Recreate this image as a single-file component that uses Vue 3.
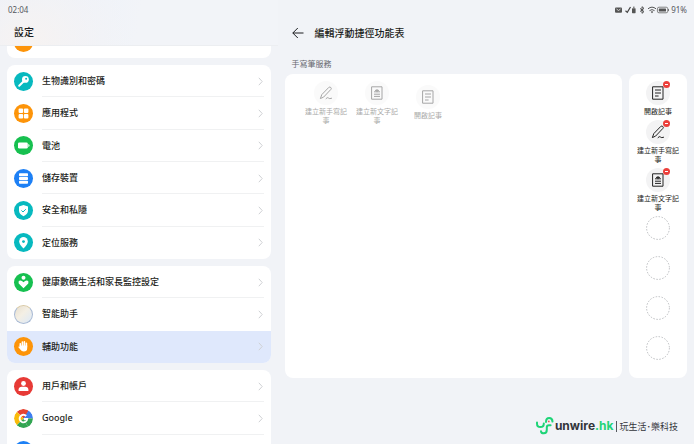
<template>
  <div class="screen">
    <!-- Settings list -->
    <aside class="left">
      <header class="top">
        <time class="clock">02:04</time>
        <h1>設定</h1>
      </header>
      <nav class="list" aria-label="設定">
        <div class="card cut">
          <a class="row" href="#"><span class="badge orange"></span></a>
        </div>
        <div v-for="(group, g) in groups" :key="g" class="card" :class="group.size">
          <a v-for="item in group.items" :key="item.icon" class="row" :class="{ active: item.active }" href="#">
            <span class="badge" :class="item.color">
              <svg viewBox="0 0 19 19" aria-hidden="true">
                <g v-if="item.icon === 'key'">
                  <circle cx="11.4" cy="7.4" r="3.4" fill="#fff" />
                  <path d="M9.5 9.5 5.2 13.8" stroke="#fff" stroke-width="2" stroke-linecap="round" />
                  <circle cx="12.1" cy="6.8" r="1" fill="#07b9bf" />
                </g>
                <g v-else-if="item.icon === 'apps'" fill="#fff">
                  <rect x="4.6" y="4.6" width="4.5" height="4.5" rx="1" />
                  <rect x="9.9" y="4.6" width="4.5" height="4.5" rx="1" />
                  <rect x="4.6" y="9.9" width="4.5" height="4.5" rx="1" />
                  <rect x="9.9" y="9.9" width="4.5" height="4.5" rx="1" />
                </g>
                <g v-else-if="item.icon === 'battery'" fill="#fff">
                  <rect x="4" y="6.4" width="9.8" height="6.2" rx="1.4" />
                  <path d="M14.3 8q1.2.2 1.2 1.5t-1.2 1.5z" />
                </g>
                <g v-else-if="item.icon === 'storage'" fill="#fff">
                  <rect x="5" y="4.3" width="9" height="3" rx=".8" />
                  <rect x="5" y="8" width="9" height="3" rx=".8" />
                  <rect x="5" y="11.7" width="9" height="3" rx=".8" />
                </g>
                <g v-else-if="item.icon === 'shield'">
                  <path d="M9.5 4 14 5.6v3.9q0 3.6-4.5 5.7Q5 13.1 5 9.5V5.6z" fill="#fff" />
                  <path d="m7.4 9.4 1.6 1.6 2.8-2.8" fill="none" stroke="#07b9bf" />
                </g>
                <g v-else-if="item.icon === 'pin'">
                  <path d="M9.5 15.4Q5.2 11.4 5.2 8.4a4.3 4.3 0 0 1 8.6 0q0 3-4.3 7z" fill="#fff" />
                  <circle cx="9.5" cy="8.6" r="1.4" fill="#07b9bf" />
                </g>
                <g v-else-if="item.icon === 'heart'" fill="#fff">
                  <circle cx="9.5" cy="4.8" r="2" />
                  <path d="M9.5 15.2 4.7 10.6Q3.9 8.2 5.8 7.5q2-.3 3.7 1.8 1.7-2.1 3.7-1.8 1.9.7 1.1 3.1z" />
                </g>
                <g v-else-if="item.icon === 'hand'">
                  <path d="M6.3 10V6.7M8.4 9V5M10.4 9V4.8M12.4 10V6.2" stroke="#fff" stroke-width="1.6" stroke-linecap="round" />
                  <path d="M5.5 8.6h7.7v2.7q0 3.3-3.4 3.3-2.3 0-3.5-2.1L4.2 10q.5-1 1.8.1z" fill="#fff" />
                </g>
                <g v-else-if="item.icon === 'user'" fill="#fff">
                  <circle cx="9.5" cy="6.5" r="2.4" />
                  <path d="M4.6 14v-1.6Q4.9 9.7 7.7 9.7h3.6q2.8 0 3.1 2.7V14z" />
                </g>
                <g v-else-if="item.icon === 'google'">
                  <path d="M9.5 9.5 2.8 2.8A9.5 9.5 0 0 1 14.5 1.4l-2 5z" fill="#e64434" />
                  <path d="M9.5 9.5 2.8 16.2A9.5 9.5 0 0 1 2.8 2.8z" fill="#fabb0a" />
                  <path d="M9.5 9.5 14 17.9A9.5 9.5 0 0 1 2.8 16.2z" fill="#32a552" />
                  <path d="M9.5 9.5 14.5 1.4A9.5 9.5 0 0 1 19 9.5z" fill="#3e7ef0" />
                  <path d="M9.5 9.5H19a9.5 9.5 0 0 1-5 8.4z" fill="#32a552" />
                  <path d="M12.2 7A3.8 3.8 0 1 0 13.2 10H9.8" fill="none" stroke="#fff" stroke-width="1.9" />
                </g>
              </svg>
            </span>
            <span class="name">{{ item.name }}</span>
            <svg class="chevron" viewBox="0 0 5 9" aria-hidden="true"><path d="m.8.8 3.4 3.7L.8 8.2" /></svg>
          </a>
        </div>
      </nav>
    </aside>

    <!-- Shortcut menu editor -->
    <main class="right">
      <header class="top">
        <div class="status">
          <svg viewBox="0 0 54 8" aria-label="狀態列">
            <rect x="0" y="1.4" width="7" height="5.4" rx="1" fill="#555" />
            <path d="m1.5 3 2 1.5 2-1.5" fill="none" stroke="#eee" stroke-width=".8" />
            <path d="m10.5 4.8 1.8 1.6L15.5 1" fill="none" stroke="#444" stroke-width="1.2" />
            <rect x="17" y="2.2" width="3.6" height="5" rx=".6" fill="#555" />
            <path d="M18 1.2h1.6" stroke="#555" />
            <path d="m25 2.4 4 3.2-2 1.7V.7l2 1.7-4 3.2" fill="none" stroke="#444" stroke-width=".9" />
            <path d="M33 2.8q4-3.3 8 0M34.5 4.6q2.5-2 5 0" fill="none" stroke="#444" stroke-width=".9" />
            <path d="m35.8 5.7 1.2 1.5 1.2-1.5q-1.2-.8-2.4 0z" fill="#444" />
            <rect x="42.4" y="1.2" width="10.4" height="5.6" rx="1.6" fill="none" stroke="#666" stroke-width=".8" />
            <rect x="43.8" y="2.6" width="7.2" height="2.8" rx=".5" fill="#555" />
            <path d="M53.6 3v2" stroke="#555" stroke-width=".8" />
          </svg>
          <span>91%</span>
        </div>
        <div class="title">
          <button type="button" aria-label="返回">
            <svg viewBox="0 0 12 12"><path d="M11.5 6H.8M5.8 1 .8 6l5 5" /></svg>
          </button>
          <h2>編輯浮動捷徑功能表</h2>
        </div>
      </header>

      <h3>手寫筆服務</h3>
      <div class="panels">
        <section class="panel pool">
          <button v-for="s in pool" :key="s.icon" class="shortcut" type="button" disabled>
            <span class="disc">
              <svg viewBox="0 0 24 24" aria-hidden="true"><path :d="glyphs[s.icon]" /></svg>
            </span>
            <span class="label">{{ s.name }}</span>
          </button>
        </section>
        <section class="panel chosen">
          <button v-for="s in chosen" :key="s.icon" class="shortcut" type="button">
            <span class="disc">
              <svg viewBox="0 0 24 24" aria-hidden="true"><path :d="glyphs[s.icon]" /></svg>
              <i class="minus"></i>
            </span>
            <span class="label">{{ s.name }}</span>
          </button>
          <div v-for="n in 4" :key="n" class="slot">
            <svg viewBox="0 0 24 24" aria-hidden="true"><circle cx="12" cy="12" r="11.4" /></svg>
          </div>
        </section>
      </div>

      <footer>
        <svg class="mark" viewBox="0 0 20 20" aria-hidden="true">
          <g fill="none" stroke="#1ed477" stroke-width="2" stroke-linecap="round">
            <path d="M2 6.5v1q0 3.6 3.4 3.6T8.8 7.5" />
            <path d="M11 6q0-4 3.2-4t3.3 3.6" />
            <path d="M15.6 9.2H14q-2.2 0-2.2 2.3v2.2q0 3.6-3 3.6-2.6 0-2.8-2" />
          </g>
          <circle cx="13.8" cy="5.4" r=".9" fill="#e55" />
        </svg>
        <strong>unwire<em>.hk</em></strong>
        <span class="slogan">玩生活･樂科技</span>
      </footer>
    </main>
  </div>
</template>

<script setup>
const groups = [
  {
    size: 'six',
    items: [
      { name: '生物識別和密碼', icon: 'key', color: 'teal' },
      { name: '應用程式', icon: 'apps', color: 'orange' },
      { name: '電池', icon: 'battery', color: 'green' },
      { name: '儲存裝置', icon: 'storage', color: 'blue' },
      { name: '安全和私隱', icon: 'shield', color: 'teal' },
      { name: '定位服務', icon: 'pin', color: 'teal' }
    ]
  },
  {
    size: 'three',
    items: [
      { name: '健康數碼生活和家長監控設定', icon: 'heart', color: 'green' },
      { name: '智能助手', icon: 'assistant', color: 'pearl' },
      { name: '輔助功能', icon: 'hand', color: 'orange', active: true }
    ]
  },
  {
    size: 'three',
    items: [
      { name: '用戶和帳戶', icon: 'user', color: 'red' },
      { name: 'Google', icon: 'google', color: 'plain' },
      { name: '', icon: 'more', color: 'blue' }
    ]
  }
]

// line drawings shared by both panels
const glyphs = {
  pen: 'M6.5 17.2 7.8 13.6 14.8 6.4q1-.8 2 .1t.1 1.9L9.9 15.8zM12 17.6q1.4-1.8 2.4-.6t3.2.3',
  text: 'M7 5.8h10v12.4H7zM9.4 15.4h5.2M9.4 13.2h5.2M9.4 10.8h5.2M12 8.4v2.4M10.4 9.4h3.2',
  note: 'M7 5.8h10v12.4H7zM9.4 9h5.2M9.4 12h5.2M9.4 15h2.8'
}

const note = { name: '開啟記事', icon: 'note' }
const pen = { name: '建立新手寫記事', icon: 'pen' }
const text = { name: '建立新文字記事', icon: 'text' }

const pool = [pen, text, note]
const chosen = [note, pen, text]
</script>

<style>
body {
  margin: 0;
  background: #f1f3f7;
}
</style>

<style scoped>
.screen {
  display: grid;
  grid-template-columns: 2fr 3fr;
  height: 100vh;
  overflow: hidden;
  font-family: "Noto Sans", "Noto Sans CJK TC", sans-serif;
  color: #1c1d20;
  background: #f1f3f7;
}

h1, h2, h3 {
  margin: 0;
  font-size: 10px;
  line-height: 16px;
  font-weight: 500;
}

button {
  margin: 0;
  padding: 0;
  border: 0;
  background: none;
  font: inherit;
  color: inherit;
}

svg {
  display: block;
}

.top {
  flex: none;
  display: flex;
  flex-direction: column;
  justify-content: space-between;
  box-sizing: border-box;
  height: 46px;
  padding: 4px 7px 5px;
}

/* left side */
.left {
  display: flex;
  flex-direction: column;
  min-height: 0;
  overflow: hidden;
}

.left .top {
  padding-left: 14px;
  background: radial-gradient(circle at 10% 100%, #f7f3f1, transparent 40%), linear-gradient(100deg, #e9f0fc, #f2f4f8 50%);
  border-bottom: 1px solid #eceef1;
}

.clock {
  margin-left: -6px;
  font-size: 8px;
  line-height: 12px;
  color: #55585e;
}

.list {
  display: flex;
  flex-direction: column;
  gap: 7px;
  padding: 0 7px;
}

.card {
  flex: none;
  display: flex;
  flex-direction: column;
  overflow: hidden;
  border-radius: 8px;
  background: #fff;
}

.cut {
  height: 12px;
  justify-content: flex-end;
  border-radius: 0 0 8px 8px;
}

.six {
  min-height: 194px;
}

.three {
  min-height: 97px;
}

.row {
  position: relative;
  flex: 1 0 auto;
  display: flex;
  align-items: center;
  gap: 9px;
  min-height: 32px;
  padding: 0 8px 0 7px;
  text-decoration: none;
  color: inherit;
}

.row:not(:last-child)::after {
  content: "";
  position: absolute;
  right: 7px;
  bottom: 0;
  left: 35px;
  height: 1px;
  background: #f0f1f2;
}

.active {
  background: #dfe8fc;
}

.row:has(+ .active)::after {
  display: none;
}

.badge {
  flex: none;
  width: 19px;
  height: 19px;
  border-radius: 50%;
  overflow: hidden;
}

.teal { background: #07b9bf; }
.orange { background: #fd9409; }
.green { background: #17c050; }
.blue { background: #1d80f5; }
.red { background: #e73a36; }
.pearl {
  box-sizing: border-box;
  border: 1px solid #a9bad4;
  border-top-color: #d9c9a5;
  background: linear-gradient(135deg, #e8dfcd, #f4efe4 45%, #dce9f8);
}

.name {
  flex: 1;
  font-size: 9px;
  line-height: 14px;
  font-weight: 500;
}

.chevron {
  width: 5px;
  height: 9px;
  fill: none;
  stroke: #cfd1d4;
}

/* right side */
.right {
  display: flex;
  flex-direction: column;
  min-width: 0;
  padding: 0 7px;
}

.right .top {
  padding-right: 0;
}

.status {
  display: flex;
  align-items: center;
  justify-content: flex-end;
  gap: 2px;
  font-size: 8px;
  line-height: 12px;
  color: #55585e;
}

.status svg {
  width: 54px;
  height: 8px;
}

.title {
  display: flex;
  align-items: center;
  gap: 11px;
}

.title svg {
  width: 12px;
  height: 12px;
  fill: none;
  stroke: #1c1d20;
}

h3 {
  padding: 10px 7px 2px;
  font-size: 8px;
  font-weight: 400;
  color: #66696f;
}

.panels {
  display: flex;
  gap: 7px;
  min-height: 304px;
}

.panel {
  box-sizing: border-box;
  padding-top: 7px;
  border-radius: 8px;
  background: #fff;
}

.pool {
  flex: 1;
  display: flex;
  align-items: flex-start;
  padding-left: 16px;
}

.pool .shortcut {
  width: 51px;
  opacity: 0.4;
}

.pool .shortcut:last-child {
  padding-top: 4px;
}

.chosen {
  flex: none;
  width: 58px;
}

.chosen .shortcut {
  width: 100%;
}

.shortcut {
  display: flex;
  flex-direction: column;
  align-items: center;
  gap: 2px;
  padding-bottom: 4px;
}

.disc {
  position: relative;
  width: 24px;
  height: 24px;
  border-radius: 50%;
  background: #f3f3f4;
}

.disc svg {
  fill: none;
  stroke: #222;
  stroke-linecap: round;
  stroke-linejoin: round;
}

.minus {
  position: absolute;
  top: 0;
  right: 0;
  display: grid;
  place-items: center;
  width: 7px;
  height: 7px;
  border-radius: 50%;
  background: #ec3f3b;
}

.minus::after {
  content: "";
  width: 3px;
  height: 1px;
  background: #fff;
}

.label {
  max-width: 44px;
  font-size: 7px;
  line-height: 9px;
  text-align: center;
}

.slot {
  display: flex;
  justify-content: center;
  height: 40px;
}

.slot svg {
  width: 24px;
  height: 24px;
  fill: none;
  stroke: #bbbdc0;
  stroke-width: 1;
  stroke-dasharray: 1.5 1.5;
}

footer {
  display: flex;
  align-items: center;
  justify-content: flex-end;
  margin-top: auto;
  padding: 0 9px 8px 0;
}

.mark {
  width: 20px;
  height: 20px;
}

strong {
  font-family: Inter, sans-serif;
  font-size: 12px;
  line-height: 16px;
  font-weight: 700;
  color: #33353a;
}

em {
  font-style: normal;
  color: #1ed477;
}

.slogan {
  margin-left: 3px;
  padding-left: 2px;
  border-left: 1px solid #55585e;
  font-size: 9px;
  line-height: 11px;
  color: #33353a;
}
</style>
